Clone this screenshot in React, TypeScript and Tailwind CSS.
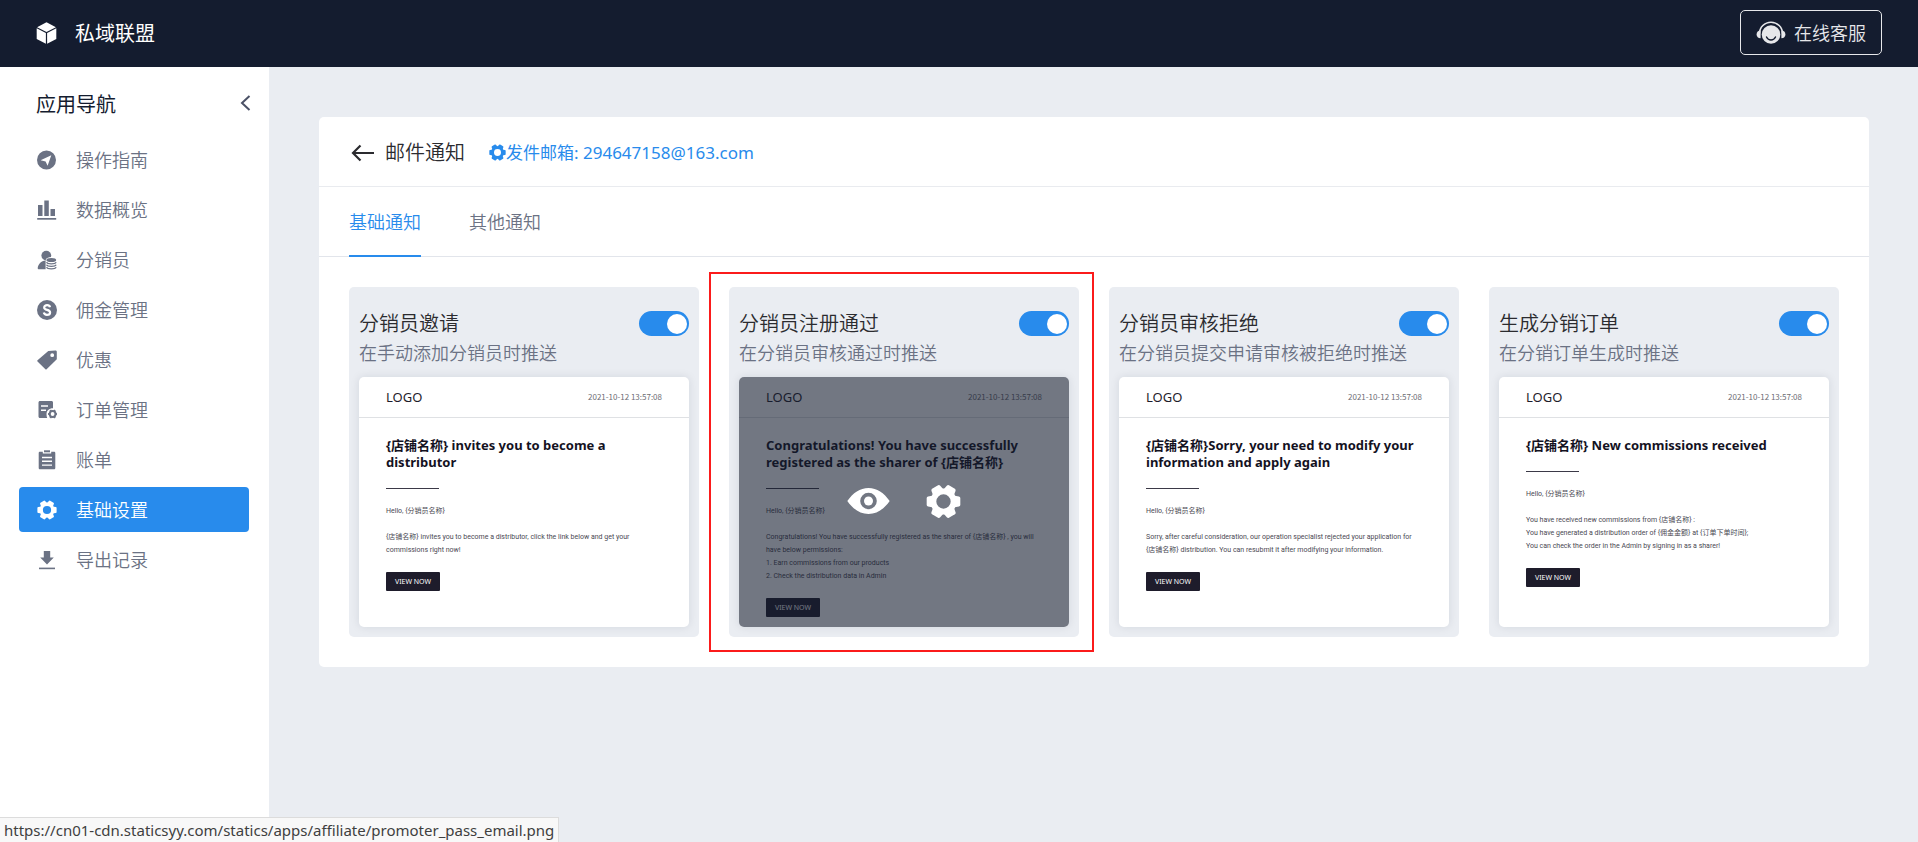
import { useState } from "react";
import type { ReactNode } from "react";
import clsx from "clsx";

interface IconProps {
  className?: string;
}

function BoxIcon({ className }: IconProps) {
  return (
    <svg viewBox="0 0 20 22" fill="currentColor" className={className} aria-hidden="true">
      <path d="M10 0.3 19.4 5.2 10 10 0.6 5.2Z" />
      <path d="M0.2 6.3 9.4 11V21.7L0.2 17Z" />
      <path d="M19.8 6.3 10.6 11V21.7L19.8 17Z" />
    </svg>
  );
}

function SupportIcon({ className }: IconProps) {
  return (
    <svg viewBox="0 0 30 24" className={className} aria-hidden="true">
      <circle cx="15" cy="13.5" r="9.3" fill="currentColor" />
      <path d="M3.5 12.5a11.5 11.3 0 0 1 23 0" fill="none" stroke="currentColor" strokeWidth="1.6" />
      <path d="M4.6 9.6v7.6C2.2 17.2 0.6 15.6 0.6 13.4S2.2 9.6 4.6 9.6Z" fill="currentColor" />
      <path d="M25.4 9.6v7.6c2.4 0 4-1.6 4-3.8s-1.6-3.8-4-3.8Z" fill="currentColor" />
      <path
        d="M10.5 16c1 2 2.6 3 4.5 3s3.5-1 4.5-3"
        fill="none"
        stroke="#141c2f"
        strokeWidth="1.4"
        strokeLinecap="round"
      />
    </svg>
  );
}

function GuideIcon({ className }: IconProps) {
  return (
    <svg viewBox="0 0 20 20" fill="currentColor" className={className} aria-hidden="true">
      <path
        fillRule="evenodd"
        d="M9.5 0.5a9.5 9.5 0 1 0 0 19 9.5 9.5 0 0 0 0-19ZM14.3 5.2 10.6 15.8 8.6 11.4 3.6 10.2Z"
      />
    </svg>
  );
}

function ChartIcon({ className }: IconProps) {
  return (
    <svg viewBox="0 0 20 20" fill="currentColor" className={className} aria-hidden="true">
      <rect x="1" y="5" width="4.5" height="11" />
      <rect x="7.3" y="0.5" width="4.5" height="15.5" />
      <rect x="13.5" y="9" width="4.5" height="7" />
      <rect x="0.2" y="18" width="19" height="1.7" />
    </svg>
  );
}

function PromoterIcon({ className }: IconProps) {
  return (
    <svg viewBox="0 0 20 20" fill="currentColor" className={className} aria-hidden="true">
      <circle cx="9.3" cy="5.6" r="4.9" />
      <path d="M8.6 10.6v8.6H1.6c-0.6 0-0.9-0.4-0.9-0.9 0.2-4 3.4-7.2 7.9-7.7Z" />
      <ellipse cx="14.3" cy="9.8" rx="5.5" ry="2.7" fill="#fff" />
      <ellipse cx="14.3" cy="10" rx="4.9" ry="2" />
      <path
        d="M9.5 12.2c1 2.1 8.6 2.1 9.7 0M9.5 14.7c1 2.1 8.6 2.1 9.7 0M9.5 17.2c1 2.1 8.6 2.1 9.7 0"
        fill="none"
        stroke="currentColor"
        strokeWidth="1.3"
      />
    </svg>
  );
}

function CommissionIcon({ className }: IconProps) {
  return (
    <svg viewBox="0 0 20 20" className={className} aria-hidden="true">
      <circle cx="10" cy="10" r="10" fill="currentColor" />
      <path
        d="M13 7.2C12.7 5.9 11.7 5.2 10.1 5.2c-1.8 0-2.9 0.9-2.9 2.2 0 3.3 5.9 1.6 5.9 5 0 1.4-1.2 2.4-3.1 2.4-1.8 0-2.9-0.8-3.2-2.2"
        fill="none"
        stroke="#fff"
        strokeWidth="2.2"
      />
    </svg>
  );
}

function TagIcon({ className }: IconProps) {
  return (
    <svg viewBox="0 0 20 20" fill="currentColor" className={className} aria-hidden="true">
      <path
        fillRule="evenodd"
        d="M11.3 0.9 18.4 0.5c0.9 0 1.5 0.6 1.4 1.4v7.3L9.6 19.2c-0.4 0.4-0.8 0.4-1.2 0L0.5 11.5c-0.4-0.4-0.4-0.8 0-1.2ZM15.2 3.3a1.9 1.9 0 1 0 0 3.8 1.9 1.9 0 0 0 0-3.8Z"
      />
    </svg>
  );
}

const TEETH = [30, 90, 150, 210, 270, 330];

function GearIcon({ className }: IconProps) {
  return (
    <svg viewBox="0 0 36 36" fill="currentColor" className={className} aria-hidden="true">
      <circle cx="18" cy="18" r="10.4" fill="none" stroke="currentColor" strokeWidth="6" />
      {TEETH.map((angle) => (
        <path
          key={angle}
          d="M11.5 9 12.8 2.2Q13.1 0.8 14.5 0.7H21.5Q22.9 0.8 23.2 2.2L24.5 9Z"
          transform={`rotate(${angle} 18 18)`}
        />
      ))}
    </svg>
  );
}

function OrderIcon({ className }: IconProps) {
  return (
    <svg viewBox="0 0 20 20" fill="currentColor" className={className} aria-hidden="true">
      <path
        fillRule="evenodd"
        d="M3 1h11.5c0.9 0 1.5 0.6 1.5 1.5V8.200c-4 0-6.500 2.5-6.5 6 0 1.500 0.200 2.700 0.700 3.800H3c-0.9 0-1.5-0.6-1.5-1.5v-14C1.5 1.6 2.1 1 3 1ZM4 5.2v1.5h7V5.2ZM4 9.5V11h5V9.5Z"
      />
      <circle cx="15.6" cy="14" r="2.9" fill="none" stroke="currentColor" strokeWidth="2" />
      {TEETH.map((angle) => (
        <rect key={angle} x="14.7" y="9.4" width="1.8" height="2" transform={`rotate(${angle} 15.6 14)`} />
      ))}
    </svg>
  );
}

function BillIcon({ className }: IconProps) {
  return (
    <svg viewBox="0 0 20 20" fill="currentColor" className={className} aria-hidden="true">
      <path d="M7 0.3h6v2H7Z" />
      <path
        fillRule="evenodd"
        d="M3 1.7h2.8v1.7h8.4V1.7H17c0.8 0 1.3 0.5 1.3 1.3v15c0 0.8-0.5 1.3-1.3 1.3H3c-0.8 0-1.3-0.5-1.3-1.3V3c0-0.8 0.5-1.3 1.3-1.3ZM5 6.8v1.4h10V6.8ZM5 10.6V12h10v-1.4ZM5 14.4v1.4h10v-1.4Z"
      />
    </svg>
  );
}

function ExportIcon({ className }: IconProps) {
  return (
    <svg viewBox="0 0 20 20" fill="currentColor" className={className} aria-hidden="true">
      <path d="M6.8 1h6.4v6.5h3.6L10 14.5 3.2 7.5h3.6Z" />
      <rect x="2" y="17.6" width="16" height="1.6" />
    </svg>
  );
}

function EyeIcon({ className }: IconProps) {
  return (
    <svg viewBox="0 0 43 26" fill="currentColor" className={className} aria-hidden="true">
      <path
        fillRule="evenodd"
        d="M0.3 13C6 5 13 0 21.5 0S37 5 42.7 13C37 21 30 26 21.5 26S6 21 0.3 13ZM21.5 4.7a8.3 8.3 0 1 0 0 16.6 8.3 8.3 0 0 0 0-16.6Z"
      />
      <circle cx="21.5" cy="13" r="4.5" />
    </svg>
  );
}

const NAV_ITEMS = [
  { label: "操作指南", Icon: GuideIcon },
  { label: "数据概览", Icon: ChartIcon },
  { label: "分销员", Icon: PromoterIcon },
  { label: "佣金管理", Icon: CommissionIcon },
  { label: "优惠", Icon: TagIcon },
  { label: "订单管理", Icon: OrderIcon },
  { label: "账单", Icon: BillIcon },
  { label: "基础设置", Icon: GearIcon, active: true },
  { label: "导出记录", Icon: ExportIcon },
];

interface Template {
  id: string;
  title: string;
  description: string;
  heading: string;
  lines: string[];
  hovered?: boolean;
}

const TEMPLATES: Template[] = [
  {
    id: "invite",
    title: "分销员邀请",
    description: "在手动添加分销员时推送",
    heading: "{店铺名称} invites you to become a\ndistributor",
    lines: [
      "{店铺名称} invites you to become a distributor, click the link below and get your",
      "commissions right now!",
    ],
  },
  {
    id: "pass",
    title: "分销员注册通过",
    description: "在分销员审核通过时推送",
    heading: "Congratulations! You have successfully\nregistered as the sharer of {店铺名称}",
    lines: [
      "Congratulations! You have successfully registered as the sharer of {店铺名称} , you will",
      "have below permissions:",
      "1. Earn commissions from our products",
      "2. Check the distribution data in Admin",
    ],
    hovered: true,
  },
  {
    id: "reject",
    title: "分销员审核拒绝",
    description: "在分销员提交申请审核被拒绝时推送",
    heading: "{店铺名称}Sorry, your need to modify your\ninformation and apply again",
    lines: [
      "Sorry, after careful consideration, our operation specialist rejected your application for",
      "{店铺名称} distribution. You can resubmit it after modifying your information.",
    ],
  },
  {
    id: "order",
    title: "生成分销订单",
    description: "在分销订单生成时推送",
    heading: "{店铺名称} New commissions received",
    lines: [
      "You have received new commissions from {店铺名称} :",
      "You have generated a distribution order of {佣金金额} at {订单下单时间};",
      "You can check the order in the Admin by signing in as a sharer!",
    ],
  },
];

function Header() {
  return (
    <header className="flex h-[67px] shrink-0 items-center justify-between bg-[#141c2f] px-9 pb-0.5 text-white">
      <div className="flex items-center gap-[18px]">
        <BoxIcon className="h-[22px] w-[21px]" />
        <span className="pt-0.5 text-[20px] leading-6">私域联盟</span>
      </div>
      <button
        type="button"
        className="flex h-[45px] items-center gap-2 rounded-[5px] border border-[#e6e7ea] px-[15px] text-[18px] leading-6 font-[350] text-[#e6e7ea]"
      >
        <SupportIcon className="h-6 w-[30px]" />
        在线客服
      </button>
    </header>
  );
}

function Sidebar() {
  return (
    <aside className="w-[269px] shrink-0 bg-white">
      <div className="flex h-[70px] items-center justify-between pr-[18px] pb-0.5 pl-9">
        <h2 className="pt-2 text-[20px] leading-6 text-[#141c2f]">应用导航</h2>
        <button type="button" aria-label="收起导航" className="pt-1 text-[#4b5166]">
          <svg viewBox="0 0 11 16" className="h-4 w-[11px]" aria-hidden="true">
            <path d="M9.5 1 2 8l7.5 7" fill="none" stroke="currentColor" strokeWidth="2" />
          </svg>
        </button>
      </div>
      <nav className="flex flex-col gap-[5px] pr-5 pl-[19px]">
        {NAV_ITEMS.map(({ label, Icon, active }) => (
          <a
            key={label}
            href="#"
            aria-current={active ? "page" : undefined}
            className={clsx(
              "flex h-[45px] items-center gap-[19px] rounded-[4px] pl-[18px] text-[18px] leading-6 font-[350]",
              active ? "bg-[#288bec] text-white" : "text-[#6b7284]"
            )}
          >
            <Icon className="size-5" />
            {label}
          </a>
        ))}
      </nav>
    </aside>
  );
}

function EmailPreview({ heading, lines, children }: { heading: string; lines: string[]; children?: ReactNode }) {
  return (
    <div className="relative mt-[11px] min-h-[250px] overflow-hidden rounded-[5px] bg-white shadow-[0_0_10px_rgba(20,28,47,0.1)]">
      <div className="flex h-[41px] items-center justify-between border-b border-[#dfe1e4] px-[27px]">
        <span className="text-[13px] leading-4 text-[#1e1c2b]">LOGO</span>
        <span className="font-['Noto_Sans_CJK_SC',sans-serif] text-[8px] leading-3 text-[#6d6d74]">
          2021-10-12 13:57:08
        </span>
      </div>
      <div className="px-[27px] pt-[19px]">
        <h4 className="text-[13px] leading-[17px] font-bold whitespace-pre text-[#14121f]">{heading}</h4>
        <div className="mt-[17px] h-px w-[53px] bg-[#3b3947]" />
        <div className="mt-4 font-['Roboto','Noto_Sans_CJK_SC',sans-serif] text-[7px] leading-[13px] whitespace-nowrap text-[#4a4953]">
          <p>Hello, {"{分销员名称}"}</p>
          <div className="mt-[13px]">
            {lines.map((line) => (
              <p key={line}>{line}</p>
            ))}
          </div>
        </div>
        <a
          href="#"
          className="mt-[15px] inline-flex h-[19px] w-[54px] items-center justify-center rounded-[1px] bg-[#1e1c2b] text-[7px] leading-3 text-white"
        >
          VIEW NOW
        </a>
      </div>
      {children}
    </div>
  );
}

function TemplateCard({ template }: { template: Template }) {
  const [enabled, setEnabled] = useState(true);
  const { id, title, description, heading, lines, hovered } = template;

  return (
    <section className="relative rounded-[5px] bg-[#eaedf2] px-2.5 pt-6 pb-2.5">
      <div className="flex items-center justify-between">
        <label htmlFor={id} className="text-[20px] leading-[25px] font-[350] text-[#2b2b2f]">
          {title}
        </label>
        <input
          id={id}
          type="checkbox"
          role="switch"
          checked={enabled}
          onChange={(e) => setEnabled(e.target.checked)}
          className="flex h-[25px] w-[50px] cursor-pointer appearance-none items-center rounded-full bg-[#c3c8d1] px-0.5 before:size-5 before:rounded-full before:bg-white before:content-[''] checked:justify-end checked:bg-[#288bec]"
        />
      </div>
      <p className="mt-[5px] text-[18px] leading-[25px] font-[350] whitespace-nowrap text-[#6b7284]">
        {description}
      </p>
      <EmailPreview heading={heading} lines={lines}>
        {hovered && (
          <div className="absolute inset-0 flex items-center justify-center gap-9 bg-[#141c2f]/60 pb-0.5 text-white">
            <button type="button" aria-label="预览">
              <EyeIcon className="h-[26px] w-[43px]" />
            </button>
            <button type="button" aria-label="设置">
              <GearIcon className="size-[35px]" />
            </button>
          </div>
        )}
      </EmailPreview>
      {hovered && (
        <div className="pointer-events-none absolute -top-[15px] -right-[15px] -bottom-[15px] -left-5 border-2 border-[#fb1b1b]" />
      )}
    </section>
  );
}

export default function App() {
  return (
    <div className="flex min-h-screen flex-col bg-[#eaedf2] font-['Noto_Sans','Noto_Sans_CJK_SC',sans-serif]">
      <Header />
      <div className="flex flex-1">
        <Sidebar />
        <main className="min-w-0 flex-1 py-[50px] pr-[49px] pl-[50px]">
          <div className="rounded-[5px] bg-white">
            <div className="flex h-[70px] items-center border-b border-[#e9ebef] px-8 pt-0.5">
              <button type="button" aria-label="返回" className="text-[#2b2b2f]">
                <svg viewBox="0 0 24 18" className="h-[18px] w-6" aria-hidden="true">
                  <path
                    d="M9.5 1.5 2 9l7.5 7.5M2 9h21"
                    fill="none"
                    stroke="currentColor"
                    strokeWidth="2.2"
                  />
                </svg>
              </button>
              <h1 className="ml-2.5 text-[20px] leading-6 font-[350] text-[#2b2b2f]">邮件通知</h1>
              <a href="#" className="ml-6 flex items-center text-[17px] leading-6 text-[#288bec]">
                <GearIcon className="size-[17px]" />
                发件邮箱: 294647158@163.com
              </a>
            </div>
            <div
              role="tablist"
              className="flex h-[70px] gap-12 border-b border-[#e2e5eb] px-[30px] text-[18px] leading-6 font-[350]"
            >
              <button
                type="button"
                role="tab"
                aria-selected="true"
                className="-mb-px border-b-2 border-[#288bec] pt-0.5 text-[#288bec]"
              >
                基础通知
              </button>
              <button
                type="button"
                role="tab"
                aria-selected="false"
                className="-mb-px border-b-2 border-transparent pt-0.5 text-[#6b7284]"
              >
                其他通知
              </button>
            </div>
            <div className="grid grid-cols-4 gap-[30px] p-[30px]">
              {TEMPLATES.map((template) => (
                <TemplateCard key={template.id} template={template} />
              ))}
            </div>
          </div>
        </main>
      </div>
      <div className="fixed bottom-0 left-0 flex h-[25px] items-center border-t border-r border-[#dcdcdc] bg-[#f8f8f8] px-1 text-[15px] leading-6 text-[#3f3f3f]">
        https://cn01-cdn.staticsyy.com/statics/apps/affiliate/promoter_pass_email.png
      </div>
    </div>
  );
}
